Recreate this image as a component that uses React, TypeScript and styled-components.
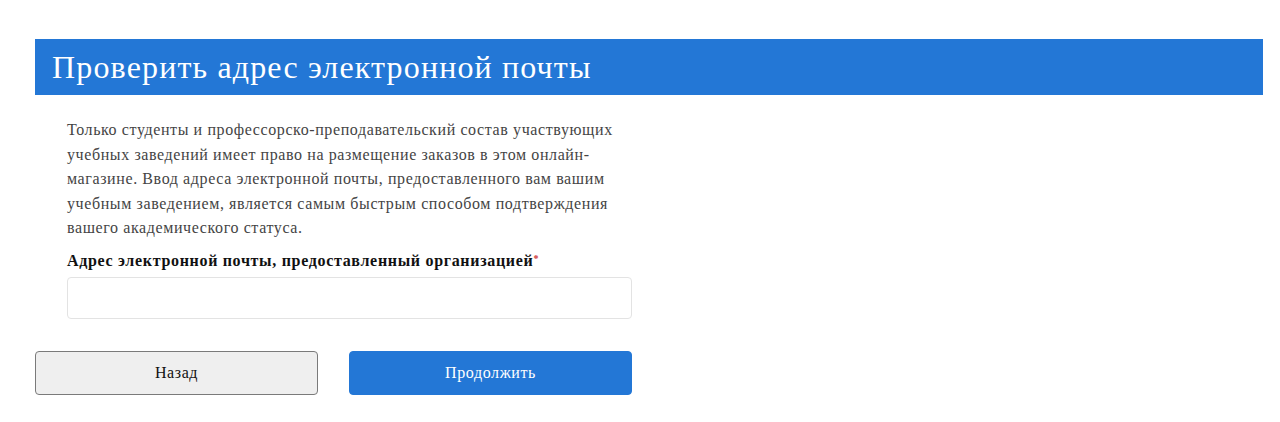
import React from "react";
import styled, { createGlobalStyle } from "styled-components";

const Global = createGlobalStyle`
  html, body { margin: 0; padding: 0; background: #fff; }
  body { font-family: "Liberation Serif", "Times New Roman", serif; }
`;

const Page = styled.div`
  padding: 39px 17px 0 35px;
`;

const Header = styled.div`
  background: #2377d6;
  height: 56px;
  display: flex;
  align-items: center;
  padding-left: 17px;
`;

const Title = styled.h1`
  margin: 0;
  font-family: "Liberation Serif", "Times New Roman", serif;
  font-weight: 400;
  font-size: 32px;
  letter-spacing: 1.15px;
  color: #fff;
  line-height: 1;
`;

const Body = styled.div`
  width: 565px;
  padding: 23px 0 0 32px;
`;

const Intro = styled.p`
  margin: 0;
  width: 640px;
  font-size: 16px;
  letter-spacing: 0.6px;
  line-height: 24.5px;
  color: #444;
`;

const Label = styled.label`
  display: block;
  margin-top: 10px;
  font-size: 16px;
  letter-spacing: 0.68px;
  font-weight: 700;
  color: #111;
  line-height: 20px;
`;

const Req = styled.span`
  color: #c33;
  font-size: 10px;
  vertical-align: top;
  position: relative;
  top: -2px;
`;

const Input = styled.input`
  display: block;
  box-sizing: border-box;
  width: 565px;
  height: 42px;
  margin-top: 6px;
  border: 1px solid #e3e3e3;
  border-radius: 4px;
  outline: none;
  background: #fff;
`;

const Actions = styled.div`
  display: flex;
  gap: 31px;
  margin-top: 32px;
  width: 597px;
`;

const Button = styled.button<{ $primary?: boolean }>`
  box-sizing: border-box;
  width: 283px;
  height: 44px;
  border-radius: 4px;
  font-family: "Liberation Serif", "Times New Roman", serif;
  font-size: 16px;
  letter-spacing: 0.6px;
  cursor: pointer;
  border: 1px solid ${(p) => (p.$primary ? "#2377d6" : "#7a7a7a")};
  background: ${(p) => (p.$primary ? "#2377d6" : "#efefef")};
  color: ${(p) => (p.$primary ? "#fff" : "#111")};
`;

export default function App() {
  return (
    <>
      <Global />
      <Page>
        <Header>
          <Title>Проверить адрес электронной почты</Title>
        </Header>
        <Body>
          <Intro>
            Только студенты и профессорско-преподавательский состав участвующих
            <br />
            учебных заведений имеет право на размещение заказов в этом онлайн-
            <br />
            магазине. Ввод адреса электронной почты, предоставленного вам вашим
            <br />
            учебным заведением, является самым быстрым способом подтверждения
            <br />
            вашего академического статуса.
          </Intro>
          <Label htmlFor="email">
            Адрес электронной почты, предоставленный организацией<Req>*</Req>
          </Label>
          <Input id="email" type="email" />
        </Body>
        <Actions>
          <Button>Назад</Button>
          <Button $primary>Продолжить</Button>
        </Actions>
      </Page>
    </>
  );
}
